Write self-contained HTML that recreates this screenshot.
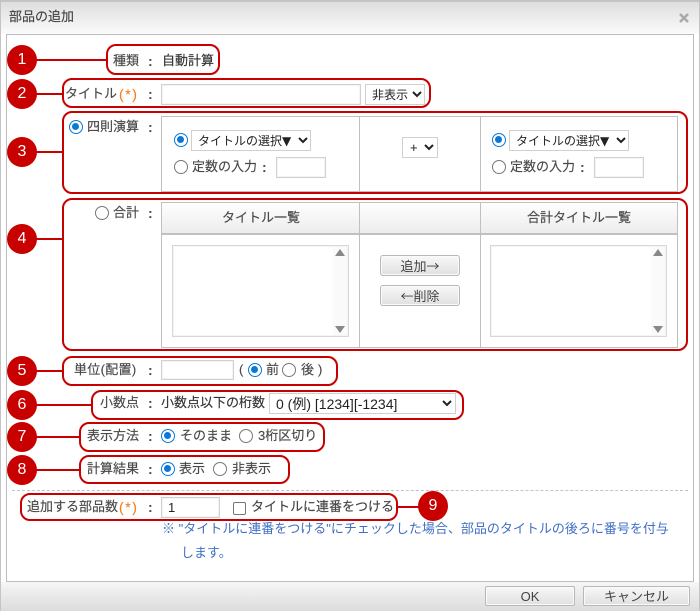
<!DOCTYPE html>
<html lang="ja"><head><meta charset="utf-8"><title>部品の追加</title>
<style>
html,body{margin:0;padding:0;background:#fff}
#p{position:relative;width:700px;height:611px;overflow:hidden;background:#fff;font-family:"Liberation Sans","Noto Sans CJK JP",sans-serif;font-size:13px;color:#484848}
#p div,#p span{position:absolute;box-sizing:border-box}
.t{white-space:nowrap;line-height:20px;height:20px;margin-top:1px;-webkit-text-stroke:.15px currentColor}
.co{font-family:"Liberation Sans",sans-serif;font-weight:bold;font-size:14px;-webkit-text-stroke:0}
.red{border:2px solid #c80000;border-radius:10px;background:transparent}
.c{width:30px;height:30px;border-radius:50%;background:#c80000;color:#fff;text-align:center;line-height:30px;font-size:16px;font-family:"Liberation Sans",sans-serif}
.l{height:2px;background:#c80000}
.in{border:1px solid #d0d0d0;background:#fff;box-shadow:inset 0 0 0 1px #f4f4f4}
.sel{border:1px solid #d0d0d0;background:#fff;color:#222;font-size:12px;line-height:20px;white-space:nowrap;padding-left:6px}
.sel small{font-family:"DejaVu Sans",sans-serif;font-size:12px;line-height:1}
.r{width:14px;height:14px;border-radius:50%;border:1.5px solid #777;background:#fff}
.r.on{border-color:#0a78d7}
.r.on::after{content:"";position:absolute;left:2px;top:2px;width:7px;height:7px;border-radius:50%;background:#0a78d7}
.or{color:#f08020;font-family:"Liberation Sans",sans-serif;font-size:14px;letter-spacing:1.6px}
.btn{border:1px solid #b8b8b8;border-radius:3px;background:linear-gradient(#f8f8f8,#e0e0e0);text-align:center;color:#444;line-height:19px;box-shadow:inset 0 0 0 1px #fafafa;font-family:"Noto Sans CJK JP",sans-serif}
.ln{background:#c0c0c0}
.th{background:linear-gradient(#fff,#ececec)}
.tri{width:0;height:0;border-left:5px solid transparent;border-right:5px solid transparent}
svg{position:absolute;overflow:visible}
</style></head><body>
<div id="p">
<div style="left:0;top:0;width:700px;height:34px;background:linear-gradient(#dedede,#fbfbfb);border-top:2px solid #c4c4c4"></div>
<div style="left:0;top:582px;width:700px;height:29px;background:linear-gradient(#f6f6f6,#dcdcdc)"></div>
<div style="left:0;top:0;width:1px;height:611px;background:#c4c4c4"></div>
<div style="left:699px;top:0;width:1px;height:611px;background:#c4c4c4"></div>
<div class="t" style="left:9px;top:6px;color:#444">部品の追加</div>
<svg style="left:679px;top:13px" width="10" height="10"><path d="M1 1L9 9M9 1L1 9" stroke="#aaa" stroke-width="2.6" fill="none"/></svg>
<div style="left:6px;top:34px;width:688px;height:548px;background:#fff;border:1px solid #bdbdbd"></div>

<!-- tables -->
<div style="left:161px;top:116px;width:517px;height:76px;border:1px solid #c0c0c0"></div>
<div class="ln" style="left:359px;top:116px;width:1px;height:76px"></div>
<div class="ln" style="left:480px;top:116px;width:1px;height:76px"></div>
<div class="th" style="left:161px;top:202px;width:517px;height:32px"></div>
<div style="left:161px;top:202px;width:517px;height:146px;border:1px solid #c0c0c0"></div>
<div class="ln" style="left:161px;top:233px;width:517px;height:2px"></div>
<div class="ln" style="left:359px;top:202px;width:1px;height:146px"></div>
<div class="ln" style="left:480px;top:202px;width:1px;height:146px"></div>

<!-- row 1 -->
<div class="t" style="left:113px;top:50px">種類</div><div class="t co" style="left:148px;top:50px">:</div>
<div class="t" style="left:162px;top:50px;color:#333">自動計算</div>
<!-- row 2 -->
<div class="t" style="left:65px;top:83px">タイトル</div><div class="t or" style="left:119px;top:83px">(*)</div><div class="t co" style="left:148px;top:83px">:</div>
<div class="in" style="left:161px;top:84px;width:200px;height:21px"></div>
<div class="sel" style="left:365px;top:84px;width:60px;height:21px">非表示</div>
<svg style="left:412px;top:91px" width="10" height="7"><path d="M1 1L5 5L9 1" stroke="#222" stroke-width="2" fill="none"/></svg>
<!-- row 3 -->
<div class="r on" style="left:69px;top:120px"></div>
<div class="t" style="left:87px;top:116px">四則演算</div><div class="t co" style="left:148px;top:116px">:</div>
<div class="r on" style="left:174px;top:133px"></div>
<div class="sel" style="left:191px;top:130px;width:120px;height:21px">タイトルの選択<small>▼</small></div>
<svg style="left:298px;top:137px" width="10" height="7"><path d="M1 1L5 5L9 1" stroke="#222" stroke-width="2" fill="none"/></svg>
<div class="r" style="left:174px;top:160px"></div>
<div class="t" style="left:192px;top:156px">定数の入力</div><div class="t co" style="left:262px;top:156px">:</div>
<div class="in" style="left:276px;top:157px;width:50px;height:21px"></div>
<div class="sel" style="left:402px;top:137px;width:36px;height:21px;padding-left:7px;font-size:13px">+</div>
<svg style="left:424px;top:144px" width="10" height="7"><path d="M1 1L5 5L9 1" stroke="#222" stroke-width="2" fill="none"/></svg>
<div class="r on" style="left:492px;top:133px"></div>
<div class="sel" style="left:509px;top:130px;width:120px;height:21px">タイトルの選択<small>▼</small></div>
<svg style="left:616px;top:137px" width="10" height="7"><path d="M1 1L5 5L9 1" stroke="#222" stroke-width="2" fill="none"/></svg>
<div class="r" style="left:492px;top:160px"></div>
<div class="t" style="left:510px;top:156px">定数の入力</div><div class="t co" style="left:580px;top:156px">:</div>
<div class="in" style="left:594px;top:157px;width:50px;height:21px"></div>
<!-- row 4 -->
<div class="r" style="left:95px;top:206px"></div>
<div class="t" style="left:113px;top:202px">合計</div><div class="t co" style="left:148px;top:202px">:</div>
<div class="t" style="left:222px;top:207px">タイトル一覧</div>
<div class="t" style="left:527px;top:207px">合計タイトル一覧</div>
<div class="in" style="left:172px;top:245px;width:177px;height:92px;border-color:#d8d8d8"></div>
<div style="left:333px;top:247px;width:14px;height:88px;background:#fafafa"></div>
<div class="tri" style="left:335px;top:249px;border-bottom:7px solid #888"></div>
<div class="tri" style="left:335px;top:326px;border-top:7px solid #888"></div>
<div class="in" style="left:490px;top:245px;width:177px;height:92px;border-color:#d8d8d8"></div>
<div style="left:651px;top:247px;width:14px;height:88px;background:#fafafa"></div>
<div class="tri" style="left:653px;top:249px;border-bottom:7px solid #888"></div>
<div class="tri" style="left:653px;top:326px;border-top:7px solid #888"></div>
<div class="btn" style="left:380px;top:255px;width:80px;height:21px">追加→</div>
<div class="btn" style="left:380px;top:285px;width:80px;height:21px">←削除</div>
<!-- row 5 -->
<div class="t" style="left:74px;top:359px;letter-spacing:.3px">単位(配置)</div><div class="t co" style="left:148px;top:359px">:</div>
<div class="in" style="left:161px;top:360px;width:73px;height:20px"></div>
<div class="t" style="left:239px;top:359px">(</div>
<div class="r on" style="left:248px;top:363px"></div>
<div class="t" style="left:266px;top:359px">前</div>
<div class="r" style="left:282px;top:363px"></div>
<div class="t" style="left:301px;top:359px">後</div>
<div class="t" style="left:318px;top:359px">)</div>
<!-- row 6 -->
<div class="t" style="left:100px;top:392px">小数点</div><div class="t co" style="left:148px;top:392px">:</div>
<div class="t" style="left:161px;top:392px;color:#333">小数点以下の桁数</div>
<div class="sel" style="left:269px;top:393px;width:187px;height:21px;font-size:14px">0 (例) [1234][-1234]</div>
<svg style="left:442px;top:400px" width="10" height="7"><path d="M1 1L5 5L9 1" stroke="#222" stroke-width="2" fill="none"/></svg>
<!-- row 7 -->
<div class="t" style="left:87px;top:425px">表示方法</div><div class="t co" style="left:148px;top:425px">:</div>
<div class="r on" style="left:161px;top:429px"></div>
<div class="t" style="left:180px;top:425px">そのまま</div>
<div class="r" style="left:239px;top:429px"></div>
<div class="t" style="left:258px;top:425px">3桁区切り</div>
<!-- row 8 -->
<div class="t" style="left:87px;top:458px">計算結果</div><div class="t co" style="left:148px;top:458px">:</div>
<div class="r on" style="left:161px;top:462px"></div>
<div class="t" style="left:179px;top:458px">表示</div>
<div class="r" style="left:213px;top:462px"></div>
<div class="t" style="left:232px;top:458px">非表示</div>
<!-- row 9 -->
<div style="left:12px;top:490px;width:676px;height:0;border-top:1px dashed #c4c4c4"></div>
<div class="t" style="left:27px;top:496px">追加する部品数</div><div class="t or" style="left:119px;top:496px">(*)</div><div class="t co" style="left:148px;top:496px">:</div>
<div class="in" style="left:161px;top:497px;width:59px;height:21px;color:#222;padding-left:6px;line-height:19px">1</div>
<div style="left:233px;top:502px;width:13px;height:13px;border:1.5px solid #777;border-radius:2px;background:#fff"></div>
<div class="t" style="left:251px;top:496px;color:#444">タイトルに連番をつける</div>
<div class="t" style="left:162px;top:518px;color:#3f6fc4;-webkit-text-stroke:0">※ "タイトルに連番をつける"にチェックした場合、部品のタイトルの後ろに番号を付与</div>
<div class="t" style="left:181px;top:542px;color:#3f6fc4;-webkit-text-stroke:0">します。</div>
<!-- footer -->
<div class="btn" style="left:485px;top:586px;width:90px;height:20px;border-radius:2px;font-family:'Liberation Sans',sans-serif;font-size:13px">OK</div>
<div class="btn" style="left:583px;top:586px;width:107px;height:20px;border-radius:2px;font-size:13px;line-height:18px">キャンセル</div>

<!-- annotation lines -->
<div class="l" style="left:30px;top:59px;width:77px"></div>
<div class="l" style="left:30px;top:93px;width:33px"></div>
<div class="l" style="left:30px;top:151px;width:33px"></div>
<div class="l" style="left:30px;top:238px;width:33px"></div>
<div class="l" style="left:30px;top:370px;width:33px"></div>
<div class="l" style="left:30px;top:404px;width:62px"></div>
<div class="l" style="left:30px;top:436px;width:50px"></div>
<div class="l" style="left:30px;top:469px;width:50px"></div>
<div class="l" style="left:397px;top:506px;width:24px"></div>
<!-- annotation boxes -->
<div class="red" style="left:106px;top:44px;width:114px;height:31px"></div>
<div class="red" style="left:62px;top:78px;width:369px;height:30px"></div>
<div class="red" style="left:62px;top:111px;width:626px;height:83px"></div>
<div class="red" style="left:62px;top:198px;width:626px;height:153px"></div>
<div class="red" style="left:62px;top:356px;width:276px;height:30px"></div>
<div class="red" style="left:91px;top:390px;width:373px;height:30px"></div>
<div class="red" style="left:79px;top:422px;width:246px;height:30px"></div>
<div class="red" style="left:79px;top:455px;width:211px;height:29px"></div>
<div class="red" style="left:20px;top:493px;width:378px;height:28px"></div>
<!-- circles -->
<div class="c" style="left:7px;top:45px">1</div>
<div class="c" style="left:7px;top:79px">2</div>
<div class="c" style="left:7px;top:137px">3</div>
<div class="c" style="left:7px;top:224px">4</div>
<div class="c" style="left:7px;top:356px">5</div>
<div class="c" style="left:7px;top:390px">6</div>
<div class="c" style="left:7px;top:422px">7</div>
<div class="c" style="left:7px;top:455px">8</div>
<div class="c" style="left:418px;top:491px">9</div>
</div>
</body></html>
